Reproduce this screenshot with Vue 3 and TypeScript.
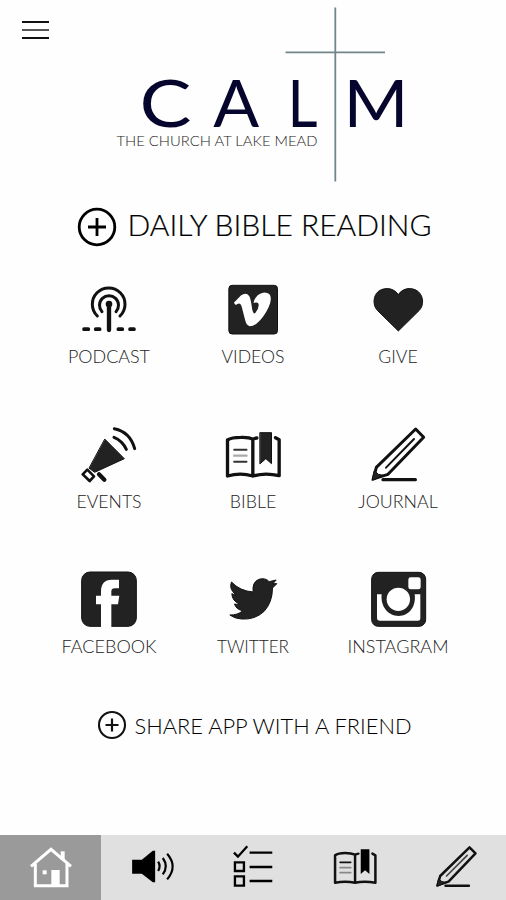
<script setup lang="ts">
interface Tile {
  id: string
  label: string
  labelWidth: number
  viewBox: string
}

const tiles: Tile[] = [
  { id: 'podcast', label: 'PODCAST', labelWidth: 82, viewBox: '87 30 180 180' },
  { id: 'videos', label: 'VIDEOS', labelWidth: 63, viewBox: '70.5 30 180 180' },
  { id: 'give', label: 'GIVE', labelWidth: 39.5, viewBox: '504 30 180 180' },
  { id: 'events', label: 'EVENTS', labelWidth: 65, viewBox: '87 30 180 180' },
  { id: 'bible', label: 'BIBLE', labelWidth: 46.5, viewBox: '70.5 30 180 180' },
  { id: 'journal', label: 'JOURNAL', labelWidth: 79.5, viewBox: '504 30 180 180' },
  { id: 'facebook', label: 'FACEBOOK', labelWidth: 95, viewBox: '87 30 180 180' },
  { id: 'twitter', label: 'TWITTER', labelWidth: 72, viewBox: '70.5 30 180 180' },
  { id: 'instagram', label: 'INSTAGRAM', labelWidth: 101, viewBox: '504 30 180 180' },
]
</script>

<template>
  <main class="screen">
    <header class="header">
      <button class="menu" aria-label="Menu">
        <span class="bar"></span>
        <span class="bar mid"></span>
        <span class="bar"></span>
      </button>
      <svg class="logo" viewBox="110 0 300 190">
        <g class="calm">
          <text x="139.500" y="127" textLength="52" lengthAdjust="spacingAndGlyphs">C</text>
          <text x="213.300" y="127" textLength="46" lengthAdjust="spacingAndGlyphs">A</text>
          <text x="287.500" y="127" textLength="30" lengthAdjust="spacingAndGlyphs">L</text>
          <text x="343.500" y="127" textLength="65" lengthAdjust="spacingAndGlyphs">M</text>
        </g>
        <text class="tagline" x="116.500" y="146.300" textLength="201" lengthAdjust="spacingAndGlyphs">THE CHURCH AT LAKE MEAD</text>
        <path class="cross" d="M335.300 7.500V181.500M285.500 52.300H385" />
      </svg>
    </header>

    <a class="action daily">
      <svg width="40" height="40" viewBox="0 0 40 40">
        <circle cx="20" cy="20" r="17.800" fill="none" stroke="#000" stroke-width="2.800" />
        <path d="M11 20H29M20 11V29" stroke="#000" stroke-width="2.800" />
      </svg>
      <svg width="306" height="40" viewBox="0 0 306 40">
        <text x="0.500" y="29" textLength="304" lengthAdjust="spacingAndGlyphs">DAILY BIBLE READING</text>
      </svg>
    </a>

    <section class="grid">
      <a v-for="t in tiles" :key="t.id" class="tile">
        <svg class="icon" :viewBox="t.viewBox">
          <g v-if="t.id === 'podcast'" class="line" stroke-width="9">
            <path d="M142 138A49 49 0 1 1 210 138M156 125A28.500 28.500 0 1 1 198 125" />
            <circle cx="177" cy="102" r="10" fill="#111" stroke="none" />
            <path d="M177 102V180" stroke-width="13" />
            <path d="M102 177.500H115M137 177.500H149M205 177.500H217M240 177.500H252" stroke-width="11" />
          </g>
          <g v-else-if="t.id === 'videos'">
            <rect x="88" y="46" width="146" height="146" rx="10" class="solid" />
            <path fill="#fff" d="M103 98L125 76Q140 66 149 78Q154 86 158 118Q162 136 168 128Q180 112 177 101Q173 95 162 99Q168 72 191 68Q214 66 214 87Q213 109 190 141Q168 169 151 169Q141 167 137 151L127 112Q123 93 109 105Z" />
          </g>
          <path v-else-if="t.id === 'give'" class="solid" d="M595 183L532 121C518 106 519 79 534 65C552 51 580 52 595 74C609 52 638 51 655 65C671 79 672 106 658 121Z" />
          <g v-else-if="t.id === 'events'" class="line" stroke-width="9">
            <path class="solid" d="M165 73L223 131L134 172L118 160Z" stroke-width="6" />
            <path d="M112 164L132 184L119 198L98 178Z" fill="#fff" stroke-width="8" />
            <path d="M147 178L163 194" stroke-width="13" />
            <path d="M192 67Q217 77 229 103M193 41Q241 51 254 101" stroke-width="9" />
          </g>
          <g v-else-if="t.id === 'bible'" class="line" stroke-width="10">
            <path d="M160 73Q149 66 124 67Q96 67 84 75V183Q123 172 160 183ZM160 73Q165 70 172 69M228 68L239 74V182Q197 172 160 183" />
            <path d="M104 104H141M104 140H141" stroke-width="6" stroke="#333" />
            <path d="M104 122H141" stroke-width="7" stroke="#aaa" />
            <path d="M182 53H216V146L199 131L182 146Z" class="solid" stroke="none" />
          </g>
          <g v-else-if="t.id === 'journal'" class="line" stroke-width="9">
            <path d="M647 42L671 67L564 178L532 188L520 192L529 157Z" />
            <path d="M558 158L642 72" stroke-width="6" />
            <path d="M516 195L523 166L535 178L550 181Z" class="solid" stroke-width="3" />
            <path d="M549 194H646" stroke-width="10" />
          </g>
          <g v-else-if="t.id === 'facebook'">
            <rect x="95" y="36" width="164" height="163" rx="25" class="solid" />
            <path fill="#fff" d="M153 202V133H138V107H153V94Q153 60 185 59H207V85H194Q184 85 184 95V107H208L204 133H184V202Z" />
          </g>
          <path v-else-if="t.id === 'twitter'" class="solid" d="M91 165Q114 166 130 152Q110 149 105 132Q111 134 119 131Q98 123 97 101Q103 104 110 105Q87 87 96 66Q121 93 161 96Q157 67 178 58Q197 52 209 65L230 60L220 71L232 71L219 84Q219 126 194 154Q166 180 126 177Q106 176 91 165Z" />
          <g v-else>
            <rect x="515" y="37" width="162" height="162" rx="20" class="solid" />
            <path fill="#fff" d="M531 103H545C541 139 564 168 596 168C628 168 649 139 644 103H661V176Q661 182 654 182H538Q531 182 531 175Z" />
            <circle cx="595" cy="118" r="35" fill="#fff" />
            <rect x="625" y="52" width="37" height="36" rx="7" fill="#fff" />
          </g>
        </svg>
        <svg class="label" viewBox="0 0 144 24">
          <text :x="72 - t.labelWidth / 2" y="18" :textLength="t.labelWidth" lengthAdjust="spacingAndGlyphs">{{ t.label }}</text>
        </svg>
      </a>
    </section>

    <a class="action share">
      <svg width="30" height="30" viewBox="0 0 30 30">
        <circle cx="15" cy="15" r="13" fill="none" stroke="#111" stroke-width="2.100" />
        <path d="M8.500 15H21.500M15 8.500V21.500" stroke="#111" stroke-width="2.200" />
      </svg>
      <svg width="280" height="30" viewBox="0 0 280 30">
        <text x="0.500" y="23.600" textLength="277" lengthAdjust="spacingAndGlyphs">SHARE APP WITH A FRIEND</text>
      </svg>
    </a>

    <nav class="tabs">
      <a class="tab active">
        <svg viewBox="0 30 303.600 195">
          <path d="M93 124L153 73L213 124M106 117V182H201V117" fill="none" stroke="#fff" stroke-width="9" />
          <rect x="182" y="79" width="12" height="26" fill="#fff" />
          <rect x="128" y="136" width="12" height="12" fill="#fff" />
          <rect x="154" y="135" width="25" height="48" fill="#fff" />
        </svg>
      </a>
      <a class="tab">
        <svg viewBox="303.600 30 303.600 195">
          <path d="M397 104H426L459 77H466V172H459L426 146H397Z" />
          <path d="M475 110Q484 124 475 138M489 99Q507 124 489 148M502 86Q535 124 502 163" fill="none" stroke="#000" stroke-width="6.500" />
        </svg>
      </a>
      <a class="tab">
        <svg viewBox="607.200 30 303.600 195">
          <path d="M703 83L715 95L743 64M706 112H733V138H706ZM706 154H733V182H706Z" fill="none" stroke="#000" stroke-width="7" />
          <path d="M750 83H818M750 126H818M750 168H818" stroke="#000" stroke-width="7" />
        </svg>
      </a>
      <a class="tab">
        <svg viewBox="151.800 30 303.600 195">
          <g class="line" stroke-width="7.500">
            <path d="M305 89Q294 84 275 84Q254 84 245 91V173Q276 167 305 173ZM305 89L315 86M357 86L366 91V173Q333 167 305 173" />
            <path d="M260 112H292" stroke-width="5" />
            <path d="M260 128H292M260 143H292" stroke-width="5" stroke="#888" />
            <path d="M322 73H348V147L335 136L322 147Z" fill="#000" stroke="none" />
          </g>
        </svg>
      </a>
      <a class="tab">
        <svg viewBox="455.400 30 303.600 195">
          <g class="line" stroke-width="7.500">
            <path d="M649 67L667 85L586 170L563 177L553 181L561 153Z" />
            <path d="M580 153L642 91" stroke="#444" stroke-width="5" />
            <path d="M551 183L556 161L565 169L577 173Z" class="solid" stroke-width="3" />
            <path d="M577 182H647" />
          </g>
        </svg>
      </a>
    </nav>
  </main>
</template>

<style>
body {
  background: #fefefe;
}
</style>

<style scoped>
.screen {
  display: flex;
  flex-direction: column;
  width: 506px;
  height: 900px;
  overflow: hidden;
  background: #fefefe;
  font-family: Lato, "Open Sans", sans-serif;
  font-weight: 300;
}
svg {
  display: block;
  flex: none;
}
.header {
  display: flex;
  height: 190px;
  padding-left: 22px;
}
.menu {
  display: flex;
  flex-direction: column;
  gap: 5.600px;
  width: 27px;
  height: 19px;
  margin: 20.800px 61px 0 0;
  padding: 0;
  border: 0;
  background: none;
}
.bar {
  height: 2.400px;
  background: #111;
}
.mid {
  background: #555;
}
.logo {
  width: 300px;
  height: 190px;
}
.calm {
  font-size: 65px;
  font-weight: 400;
  fill: #05052d;
}
.tagline {
  font-size: 14.300px;
  fill: #222;
}
.cross {
  fill: none;
  stroke: #71858a;
  stroke-width: 1.800;
}
.action {
  display: flex;
  align-items: center;
}
.daily {
  height: 40px;
  margin-top: 17px;
  padding-left: 76.700px;
  gap: 10.800px;
  font-size: 29.300px;
}
.daily text {
  stroke: #000;
  stroke-width: 0.200px;
}
.grid {
  display: grid;
  grid-template-columns: repeat(3, 144.500px);
  grid-auto-rows: 145px;
  margin: 33px 0 0 36.500px;
}
.tile {
  display: flex;
  flex-direction: column;
  align-items: center;
}
.icon {
  width: 60px;
  height: 60px;
}
.label {
  width: 144px;
  height: 24px;
  margin-top: 4.700px;
  font-size: 17.200px;
  fill: #222;
}
.solid {
  fill: #222;
  stroke: #111;
  stroke-width: 3;
}
.line {
  fill: none;
  stroke: #111;
  stroke-linecap: round;
  stroke-linejoin: round;
}
.share {
  height: 30px;
  margin-top: -5px;
  padding-left: 97px;
  gap: 7px;
  font-size: 21.500px;
}
.tabs {
  display: grid;
  grid-template-columns: repeat(5, 1fr);
  height: 65px;
  margin-top: auto;
  background: #e0e0e0;
}
.tab svg {
  width: 100%;
  height: 65px;
}
.active {
  background: #9a9a9a;
}
</style>
